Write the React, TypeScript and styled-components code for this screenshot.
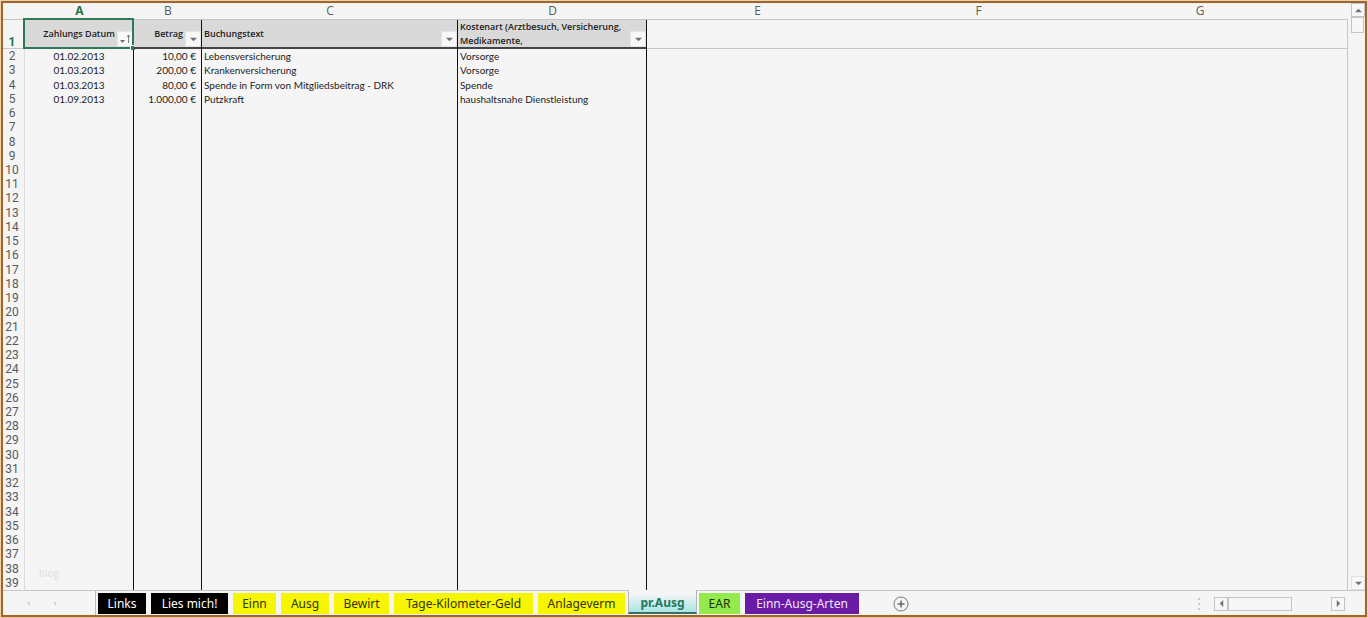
import React, { useState } from "react";
import styled, { createGlobalStyle, css } from "styled-components";

const GlobalStyle = createGlobalStyle`
  *, *::before, *::after { box-sizing: border-box; }
  html, body { margin: 0; padding: 0; background: #f5f5f5; }
  body { font-family: "Open Sans", "Noto Sans", sans-serif; color: #1c1c1c; }
  button { font: inherit; margin: 0; padding: 0; border: 0; background: none; }
`;

const ink = "#111";
const rule = "#c6c8c8";
const green = "#217346";

const Frame = styled.div`
  height: 100vh;
  min-height: 580px;
  border: 1px solid #f3d3a4;
  border-bottom-color: #f4c492;
`;

const Workbook = styled.main`
  height: 100%;
  display: flex;
  flex-direction: column;
  border: 2px solid #9a6638;
  background: #f5f5f5;
  box-shadow: inset 0 0 2px 1px #fdeed8;
`;

const SheetArea = styled.div`
  flex: 1;
  min-height: 0;
  display: flex;
`;

const GridPane = styled.div`
  position: relative;
  flex: 1;
  min-width: 0;
  height: 100%;
`;

const Grid = styled.table`
  width: 100%;
  height: 100%;
  table-layout: fixed;
  border-collapse: separate;
  border-spacing: 0;
  font-size: 9px;
  line-height: 12px;
`;

const Col = styled.col<{ $width?: number }>`
  width: ${(p) => (p.$width ? `${p.$width}px` : "auto")};
`;

const headText = css`
  padding: 0;
  font-size: 12px;
  font-weight: 400;
  color: #5a5a5a;
`;

const ColumnHead = styled.th<{ $active?: boolean }>`
  ${headText}
  height: 17px;
  line-height: 16px;
  border-bottom: 1px solid ${rule};
  ${(p) => p.$active && `color: ${green}; font-weight: 700;`}
`;

const RowHead = styled.th<{ $active?: boolean }>`
  ${headText}
  font-family: Roboto, "Liberation Sans", sans-serif;
  padding-right: 3px;
  text-align: center;
  vertical-align: ${(p) => (p.$active ? "bottom" : "middle")};
  border-right: 1px solid #dcdcdc;
  ${(p) => p.$active && `color: ${green}; font-weight: 700; border-bottom: 1px solid ${rule};`}
`;

type Align = "left" | "center" | "right";

const TitleCell = styled.th<{ $align: Align }>`
  position: relative;
  height: 29px;
  padding: 0 ${(p) => (p.$align === "center" ? 2 : 18)}px 0 2px;
  background: #d9d9d9;
  border-right: 1px solid ${ink};
  border-bottom: 1px solid #444;
  box-shadow: inset 0 -1px #444;
  font-weight: 600;
  line-height: 14px;
  text-align: ${(p) => p.$align};
  color: #222;
`;

const BlankTitle = styled.td<{ $last?: boolean }>`
  padding: 0;
  border-bottom: 1px solid ${rule};
  ${(p) => p.$last && `border-right: 1px solid ${rule};`}
`;

const Cell = styled.td<{ $align?: Align; $ruled?: boolean; $last?: boolean }>`
  padding: 0 ${(p) => (p.$align === "right" ? 5 : 2)}px 0 2px;
  font-family: Lato, "Open Sans", sans-serif;
  font-size: 10px;
  text-align: ${(p) => p.$align ?? "left"};
  white-space: nowrap;
  ${(p) => p.$ruled && `border-right: 1px solid ${ink};`}
  ${(p) => p.$last && `border-right: 1px solid ${rule};`}
`;

const FilterButton = styled.button`
  position: absolute;
  right: 0;
  bottom: 1px;
  width: 16px;
  height: 16px;
  display: grid;
  place-items: center;
  background: #f8f8f8;
  border: 1px solid #e6e6e6;
`;

const Selection = styled.span`
  position: absolute;
  inset: -2px -1px -1px -2px;
  border: 2px solid #2f7a55;
  pointer-events: none;

  &::after {
    content: "";
    position: absolute;
    right: -3px;
    bottom: -3px;
    width: 5px;
    height: 5px;
    background: #2f7a55;
    border: 1px solid #f5f5f5;
    border-width: 1px 0 0 1px;
  }
`;

const Watermark = styled.span`
  position: absolute;
  left: 36px;
  bottom: 10px;
  font-size: 10px;
  line-height: 14px;
  color: #dedede;
`;

const VerticalScroll = styled.div`
  width: 17px;
  padding: 0 1px 0 3px;
  display: flex;
  flex-direction: column;
`;

const ScrollButton = styled.button<{ $soft?: boolean }>`
  width: 14px;
  height: 14px;
  display: grid;
  place-items: center;
  background: #f8f8f8;
  border: 1px solid ${(p) => (p.$soft ? "#e2e2e2" : "#c4c4c4")};
`;

const VerticalThumb = styled.div`
  height: 16px;
  background: #f7f7f7;
  border: 1px solid #c4c4c4;
`;

const Spacer = styled.div`
  flex: 1;
`;

const BottomBar = styled.footer`
  height: 25px;
  flex: none;
  display: flex;
  align-items: flex-start;
`;

const SheetArrows = styled.div`
  width: 93px;
  height: 25px;
  padding: 1px 37px 0 22px;
  display: flex;
  align-items: center;
  justify-content: space-between;
  border-top: 1px solid ${rule};
  border-right: 1px solid #bbb;
`;

const ArrowButton = styled.button`
  width: 6px;
  height: 10px;
  display: grid;
  place-items: center;
`;

const TabSlot = styled.div`
  height: 24px;
  padding: 2px 3px 0 2px;
  border-top: 1px solid ${rule};
`;

const Tab = styled.button<{ $bg: string; $fg: string; $width: number }>`
  display: block;
  width: ${(p) => p.$width}px;
  height: 21px;
  background: ${(p) => p.$bg};
  color: ${(p) => p.$fg};
  font-family: "Noto Sans", "Open Sans", sans-serif;
  font-size: 12px;
  line-height: 20px;
  text-align: center;
  white-space: nowrap;
`;

const ActiveTab = styled(Tab)`
  height: 24px;
  padding-top: 3px;
  border: solid #b4b4b4;
  border-width: 0 1px;
  border-bottom: 2px solid #3b6e62;
  font-weight: 700;
`;

const TabFiller = styled.div`
  flex: 1;
  height: 25px;
  padding: 1px 20px 0 31px;
  display: flex;
  align-items: center;
  border-top: 1px solid ${rule};
`;

const AddButton = styled.button`
  width: 16px;
  height: 16px;
  display: grid;
  place-items: center;
`;

const Grip = styled.span`
  width: 2px;
  height: 12px;
  margin-right: 14px;
  background: repeating-linear-gradient(#c8c8c8 0 2px, transparent 2px 5px);
`;

const HorizontalScroll = styled.div`
  width: 131px;
  display: flex;
`;

const HorizontalThumb = styled.div`
  width: 64px;
  height: 14px;
  background: #f7f7f7;
  border: 1px solid #c4c4c4;
`;

const Triangle = ({ turn = 0, size = 7, fill = "#707070" }: { turn?: number; size?: number; fill?: string }) => (
  <svg width={size} height={size} viewBox="0 0 8 8" aria-hidden="true">
    <path d="M0 2h8L4 6z" fill={fill} transform={`rotate(${turn} 4 4)`} />
  </svg>
);

const SortedIcon = () => (
  <svg width="12" height="12" viewBox="0 0 12 12" aria-hidden="true">
    <path d="M1 7h5L3.500 10z" fill="#707070" />
    <path d="M9.500 10V2M8 4l1.500-2L11 4" fill="none" stroke="#808080" />
  </svg>
);

interface Booking {
  date: string;
  amount: string;
  text: string;
  kind: string;
}

const bookings: Booking[] = [
  { date: "01.02.2013", amount: "10,00 €", text: "Lebensversicherung", kind: "Vorsorge" },
  { date: "01.03.2013", amount: "200,00 €", text: "Krankenversicherung", kind: "Vorsorge" },
  { date: "01.03.2013", amount: "80,00 €", text: "Spende in Form von Mitgliedsbeitrag - DRK", kind: "Spende" },
  { date: "01.09.2013", amount: "1.000,00 €", text: "Putzkraft", kind: "haushaltsnahe Dienstleistung" },
];

const titles: { text: string; align: Align }[] = [
  { text: "Zahlungs Datum", align: "center" },
  { text: "Betrag", align: "right" },
  { text: "Buchungstext", align: "left" },
  { text: "Kostenart (Arztbesuch, Versicherung, Medikamente,", align: "left" },
];

const columnWidths = [22, 109, 68, 256, 189, 221, 221, 222, undefined];
const columnNames = ["", "A", "B", "C", "D", "E", "F", "G", ""];
const rowNumbers = Array.from({ length: 38 }, (_, i) => i + 2);

const yellow = "#f6f600";
const tabs = [
  { name: "Links", width: 48, bg: "#000", fg: "#fff" },
  { name: "Lies mich!", width: 77, bg: "#000", fg: "#fff" },
  { name: "Einn", width: 43, bg: yellow, fg: "#333300" },
  { name: "Ausg", width: 48, bg: yellow, fg: "#333300" },
  { name: "Bewirt", width: 55, bg: yellow, fg: "#333300" },
  { name: "Tage-Kilometer-Geld", width: 139, bg: yellow, fg: "#333300" },
  { name: "Anlageverm", width: 87, bg: yellow, fg: "#333300" },
  { name: "pr.Ausg", width: 69, bg: "linear-gradient(#f5f5f5 20%, #a9e4e4)", fg: "#217a5c" },
  { name: "EAR", width: 41, bg: "#92ea4c", fg: "#1c3008" },
  { name: "Einn-Ausg-Arten", width: 114, bg: "#6a1ba6", fg: "#f3e6fa" },
];

export default function App() {
  const [active, setActive] = useState("pr.Ausg");
  return (
    <>
      <GlobalStyle />
      <Frame>
        <Workbook>
          <SheetArea>
            <GridPane>
              <Grid>
                <colgroup>
                  {columnWidths.map((w, i) => (
                    <Col key={i} $width={w} />
                  ))}
                </colgroup>
                <thead>
                  <tr>
                    {columnNames.map((name, i) => (
                      <ColumnHead key={i} scope="col" $active={name === "A"}>
                        {name}
                      </ColumnHead>
                    ))}
                  </tr>
                  <tr>
                    <RowHead scope="row" $active>1</RowHead>
                    {titles.map((t, i) => (
                      <TitleCell key={t.text} $align={t.align}>
                        {t.text}
                        <FilterButton type="button" aria-label={`Filter ${t.text}`}>
                          {i === 0 ? <SortedIcon /> : <Triangle />}
                        </FilterButton>
                        {i === 0 && <Selection />}
                      </TitleCell>
                    ))}
                    <BlankTitle />
                    <BlankTitle />
                    <BlankTitle />
                    <BlankTitle $last />
                  </tr>
                </thead>
                <tbody>
                  {rowNumbers.map((n, i) => {
                    const b = bookings[i];
                    return (
                      <tr key={n}>
                        <RowHead scope="row">{n}</RowHead>
                        <Cell $align="center" $ruled>{b?.date}</Cell>
                        <Cell $align="right" $ruled>{b?.amount}</Cell>
                        <Cell $ruled>{b?.text}</Cell>
                        <Cell $ruled>{b?.kind}</Cell>
                        <Cell />
                        <Cell />
                        <Cell />
                        <Cell $last />
                      </tr>
                    );
                  })}
                </tbody>
              </Grid>
              <Watermark>blog</Watermark>
            </GridPane>
            <VerticalScroll>
              <ScrollButton type="button" aria-label="Scroll up"><Triangle turn={180} /></ScrollButton>
              <VerticalThumb />
              <Spacer />
              <ScrollButton type="button" $soft aria-label="Scroll down"><Triangle /></ScrollButton>
            </VerticalScroll>
          </SheetArea>
          <BottomBar>
            <SheetArrows>
              <ArrowButton type="button" aria-label="Previous sheets"><Triangle turn={90} size={5} fill="#d0d0d0" /></ArrowButton>
              <ArrowButton type="button" aria-label="Next sheets"><Triangle turn={-90} size={5} fill="#d0d0d0" /></ArrowButton>
            </SheetArrows>
            {tabs.map((t) =>
              t.name === active ? (
                <ActiveTab key={t.name} type="button" $bg={t.bg} $fg={t.fg} $width={t.width}>
                  {t.name}
                </ActiveTab>
              ) : (
                <TabSlot key={t.name}>
                  <Tab type="button" $bg={t.bg} $fg={t.fg} $width={t.width} onClick={() => setActive(t.name)}>
                    {t.name}
                  </Tab>
                </TabSlot>
              )
            )}
            <TabFiller>
              <AddButton type="button" aria-label="New sheet">
                <svg width="16" height="16" viewBox="0 0 16 16" aria-hidden="true">
                  <circle cx="8" cy="8" r="7" fill="none" stroke="#777" />
                  <path d="M8 4.500v7M4.500 8h7" stroke="#666" strokeWidth="1.500" />
                </svg>
              </AddButton>
              <Spacer />
              <Grip />
              <HorizontalScroll>
                <ScrollButton type="button" aria-label="Scroll left"><Triangle turn={90} /></ScrollButton>
                <HorizontalThumb />
                <Spacer />
                <ScrollButton type="button" aria-label="Scroll right"><Triangle turn={-90} /></ScrollButton>
              </HorizontalScroll>
            </TabFiller>
          </BottomBar>
        </Workbook>
      </Frame>
    </>
  );
}
